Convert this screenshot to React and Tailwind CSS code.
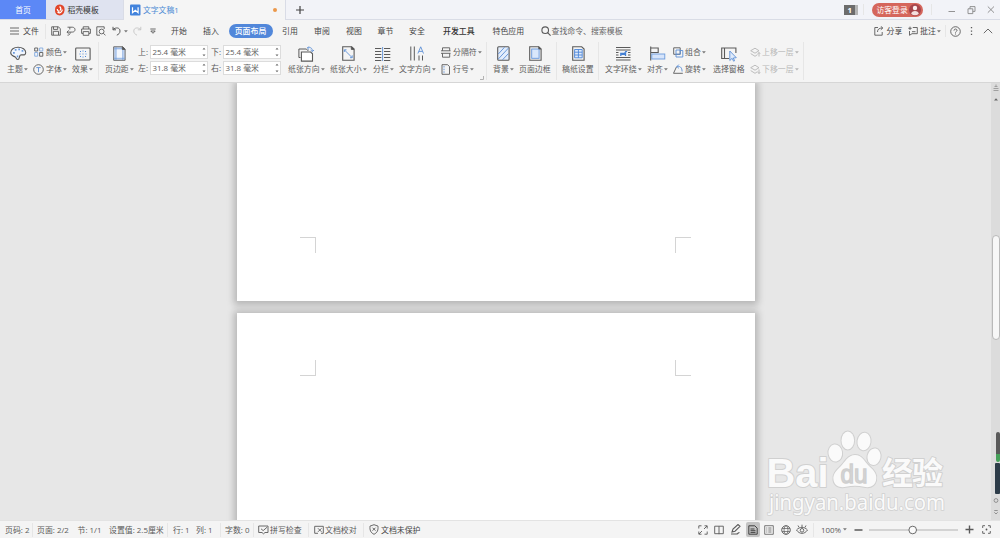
import React from 'react';

const Icon = ({ w, h, className = '', children }) => (
  <svg
    width={w}
    height={h}
    viewBox={`0 0 ${w} ${h}`}
    fill="none"
    stroke="#5a5a5a"
    strokeWidth="0.9"
    className={`shrink-0 ${className}`}
  >
    {children}
  </svg>
);

const Caret = ({ className = '' }) => (
  <svg width="4" height="3" viewBox="0 0 4 3" className={`shrink-0 ${className}`}>
    <path d="M0 0.3h3.8L1.9 2.5z" fill="#777" />
  </svg>
);

const Divider = ({ className = '' }) => <div className={`w-px shrink-0 bg-[#e6e6e6] ${className}`} />;

// large ribbon button: icon on top, label below
const BigButton = ({ width, icon, label, caret }) => (
  <div className={`flex shrink-0 flex-col items-start pt-[4px] ${width}`}>
    <div className="flex h-[15px] items-center">{icon}</div>
    <div className="mt-[3px] flex h-[10px] items-center gap-[1px] whitespace-nowrap">
      <span>{label}</span>
      {caret && <Caret />}
    </div>
  </div>
);

const SmallButton = ({ icon, label, muted }) => (
  <div className={`flex h-[17px] items-center whitespace-nowrap ${muted ? 'text-[#b9b9b9]' : ''}`}>
    <div className="flex w-[12px] shrink-0 items-center">{icon}</div>
    <span>{label}</span>
    <Caret className={muted ? 'ml-[1.5px] opacity-50' : 'ml-[1.5px]'} />
  </div>
);

const MarginInput = ({ label, value }) => (
  <div className="flex h-[15px] items-center">
    <span className="w-[12px] shrink-0">{label}:</span>
    <div className="flex h-[14px] w-[58px] items-center justify-between border border-[#dcdcdc] bg-white pr-[1px] pl-[1.5px]">
      <span>{value} 毫米</span>
      <svg width="4" height="10" viewBox="0 0 4 10" fill="#666">
        <path d="M0.5 2.5h3L2 0.8zM0.5 7.5h3L2 9.2z" />
      </svg>
    </div>
  </div>
);

const menuItems = [
  { label: '引用', width: 'w-[32px]' },
  { label: '审阅', width: 'w-[32px]' },
  { label: '视图', width: 'w-[31.5px]' },
  { label: '章节', width: 'w-[31.5px]' },
  { label: '安全', width: 'w-[34px]' },
  { label: '开发工具', width: 'w-[49.5px] font-medium text-[#333]' },
  { label: '特色应用', width: 'w-[48.5px]' },
];

const TabBar = () => (
  <div className="flex h-[20px] items-stretch border-b border-[#d9dce6] bg-[#f2f3f8] text-[7.8px]">
    <div className="flex w-[46px] items-center justify-center bg-[#5c88f6] pt-[1px] text-white">首页</div>
    <div className="flex w-[77px] items-center bg-[#dfe3f0] pt-[1px] pl-[9px] text-[#333]">
      <Icon w={10} h={12} className="mr-[2.5px]">
        <path d="M4.8 0.6c4 0.6 5 2.400 4.700 6-0.300 3.200-2 4.800-4.700 4.900C1.600 11.400 0 9.600 0 6.600 0 3 1 1 4.800 0.600z" fill="#e2472b" stroke="none" />
        <path d="M4.600 2.500c1.600 1.300 1.500 2.600 0.700 4M2.300 5c0 1.500 1 2.400 2.400 2M2.600 8c1.500 1.500 4 1 4.800-2.300" stroke="#fff" strokeWidth="1.200" />
      </Icon>
      稻壳模板
    </div>
    <div className="-mb-px flex w-[163px] items-center border-x border-[#d9dce6] bg-[#f5f5f5] pl-[6px] text-[#4a8ad4]">
      <Icon w={11} h={12} className="mr-[2px]">
        <rect x="0" y="0.500" width="10.500" height="11" rx="1" fill="#4283dc" stroke="none" />
        <path d="M2.500 3.300v5.400l2.800-2.400 2.800 2.400V3.300" stroke="#fff" strokeWidth="1.200" />
      </Icon>
      文字文稿1
      <div className="mr-[8px] ml-auto size-[4px] rounded-full bg-[#eb984a]" />
    </div>
    <div className="flex w-[558px] items-center pl-[9px]">
      <Icon w={10} h={10}>
        <path d="M1 5h8M5 1v8" stroke="#444" strokeWidth="1.200" />
      </Icon>
    </div>
    <div className="flex w-[19px] items-center">
      <div className="flex h-[10px] w-[14px] items-center border-r-[3px] border-[#b5b5b5] bg-[#6c6c6c] pl-[3.5px] font-bold text-white">1</div>
    </div>
    <Divider className="my-[4px]" />
    <div className="flex w-[67px] items-center pl-[8px]">
      <div className="flex h-[14px] w-[51px] items-center justify-between rounded-full bg-[#d5665c] pr-[2px] pl-[4.5px] text-white">
        访客登录
        <Icon w={12} h={12}>
          <circle cx="6" cy="6" r="6" fill="#a5454c" stroke="none" />
          <circle cx="6" cy="4" r="2.200" fill="#fbeeee" stroke="none" />
          <path d="M2.200 10c0-4 7.600-4 7.600 0q-3.800 2.500-7.600 0z" fill="#f3dede" stroke="none" />
        </Icon>
      </div>
    </div>
    <Divider className="my-[4px]" />
    <div className="flex items-center pl-[16px]">
      <Icon w={8} h={10} className="mr-[11px]">
        <path d="M0.500 6.500h6.500" stroke="#888" />
      </Icon>
      <Icon w={9} h={10} className="mr-[11px]">
        <path d="M1 3.800h4.800v4.800H1zM3 3.800V1.600h5v4.800H5.800" stroke="#888" strokeLinejoin="round" />
      </Icon>
      <Icon w={8} h={10}>
        <path d="M0.800 1.500l6.200 6.200M7 1.500L0.800 7.700" stroke="#888" />
      </Icon>
    </div>
  </div>
);

const MenuBar = () => (
  <div className="flex h-[22px] items-center pl-[10px] text-[#444]">
    <Icon w={9} h={8} className="mr-[4px]">
      <path d="M0 1h9M0 4h9M0 7h9" />
    </Icon>
    <span className="w-[22px]">文件</span>
    <Divider className="h-[15px]" />
    <Icon w={10} h={10} className="ml-[5px]">
      <path d="M0.700 0.800h6.800l1.800 2v6.400H0.700zM2.500 0.800v2.600h4.200V0.800M2.300 9V5.300h5.200V9" />
    </Icon>
    <Icon w={10} h={10} className="ml-[5px]">
      <path d="M1.500 1.200h4.800c3.600 0 3.600 4.900 0 4.900H1M3.800 3.500V1.200M2.800 4.300L1 6.100l1.500 1.600M4.200 6.300c0 2-1 2.900-2.700 2.900" />
    </Icon>
    <Icon w={10} h={10} className="ml-[5px]">
      <path d="M2.200 3V0.800h5.600V3M2 7.400H0.600V3h8.800v4.400H8M2.200 5.600h5.600v3.700H2.200z" />
    </Icon>
    <Icon w={10} h={10} className="ml-[5px]">
      <path d="M4 9.200H0.800V0.800h7.400V3" />
      <circle cx="5.600" cy="5.500" r="2.400" />
      <path d="M7.300 7.200l2.200 2.200" />
    </Icon>
    <Icon w={10} h={10} className="ml-[6px]">
      <path d="M0.800 3.500C4 1 8 1.500 8 5c0 2.200-1.300 3.200-3.200 4.200M1 0.800v3h3" strokeWidth="1" />
    </Icon>
    <Caret className="ml-[2px]" />
    <Icon w={9} h={10} className="ml-[5px]">
      <path d="M7.800 3.500C4.800 1 0.800 1.500 0.800 5c0 2.200 1.300 3.200 3.200 4.200M7.800 0.800v3h-3" stroke="#c4c4c4" />
    </Icon>
    <Icon w={6} h={8} className="mr-[15px] ml-[8px]">
      <path d="M0.300 2h5.400M0.800 4h4.400L3 6.300z" />
    </Icon>
    <span className="w-[32px] shrink-0">开始</span>
    <span className="w-[25.500px] shrink-0">插入</span>
    <span className="mr-[9.500px] flex h-[14px] w-[44px] shrink-0 items-center justify-center rounded-full bg-[#5187da] font-medium text-white">
      页面布局
    </span>
    {menuItems.map((item) => (
      <span key={item.label} className={`shrink-0 whitespace-nowrap ${item.width}`}>
        {item.label}
      </span>
    ))}
    <Icon w={10} h={10}>
      <circle cx="4.200" cy="4.200" r="3.300" strokeWidth="1.100" />
      <path d="M6.600 6.600l3 3" strokeWidth="1.100" />
    </Icon>
    <span className="ml-[0.500px] whitespace-nowrap text-[#666]">查找命令、搜索模板</span>
    <div className="ml-auto flex w-[126px] shrink-0 items-center">
      <Icon w={10} h={10}>
        <path d="M4 1.500H0.800v7.700h7.400V6M3.500 6c0-2.700 1.500-4 5-4M6.800 0.300L8.800 2 6.800 3.800" />
      </Icon>
      <span className="ml-[2.500px] w-[21.500px]">分享</span>
      <Icon w={10} h={10}>
        <path d="M4.800 1.500h4.500v6.200H4L1.500 9.300V5M0.300 2.300h3.400M2 0.600V4M4 5.700h3.500" />
      </Icon>
      <span className="ml-[2px] w-[17px] whitespace-nowrap">批注</span>
      <Caret />
      <Divider className="mr-[4px] ml-[4px] h-[12px]" />
      <Icon w={11} h={11}>
        <circle cx="5.500" cy="5.500" r="4.800" />
        <path d="M4 4.600c0-2.200 3.200-2 3 0C6.900 5.400 5.500 5.500 5.500 6.600M5.500 7.500v1" />
      </Icon>
      <Icon w={3} h={10} className="ml-[9px]">
        <path d="M1.500 1v1.300M1.500 4.400v1.300M1.500 7.800v1.300" strokeWidth="1.300" />
      </Icon>
      <Icon w={10} h={6} className="ml-[10px]">
        <path d="M0.800 5.200L5 1l4.200 4.200" />
      </Icon>
    </div>
  </div>
);

const Ribbon = () => (
  <div className="flex h-[40px] items-start pl-[7px] text-[#5c5c5c]">
    <BigButton
      width="w-[27px]"
      label="主题"
      caret
      icon={
        <Icon w={17} h={15} className="ml-[2.500px]">
          <path d="M8 1.200c4.500 0 7.700 2.400 7.700 5.300 0 3-2.200 2.400-4.300 2.300-3 0-1.200 4.700-3.500 4.700-1.700 0-1.500-1.800-2.700-2.500C3.500 10 0.700 9.800 0.700 6.800 0.700 3.500 4 1.200 8 1.200z" fill="#f0f6ff" strokeWidth="1.100" />
          <path d="M3 6.800h1.800M4.800 3.900h1.700M8.300 3.300h1.700M11.600 4.800h1.700M6.800 10.300h1.500" stroke="#6b9adb" strokeWidth="1.700" />
        </Icon>
      }
    />
    <div className="flex w-[38px] shrink-0 flex-col pt-[1.500px]">
      <SmallButton
        label="颜色"
        icon={
          <Icon w={10} h={10}>
            <path d="M0.700 1h3v3h-3zM5.600 5.500h3.200v3.700H5.600z" />
            <path d="M5.600 1h3.200v3H5.600zM0.700 5.500h3v3.700h-3z" stroke="#7fa8df" />
          </Icon>
        }
      />
      <SmallButton
        label="字体"
        icon={
          <Icon w={11} h={11} className="-ml-px">
            <circle cx="5.500" cy="5.500" r="4.800" />
            <path d="M3.300 3.600h4.400M5.500 3.600v4.600" stroke="#5b8ed6" />
          </Icon>
        }
      />
    </div>
    <BigButton
      width="w-[26px]"
      label="效果"
      caret
      icon={
        <Icon w={16} h={14} className="ml-[2.500px]">
          <rect x="0.700" y="1" width="14.400" height="12" rx="0.800" strokeWidth="1.100" />
          <path d="M5 4.500h1M7.500 4h1M10 4.500h1M4.500 7h1M7.500 7h1M10.500 7h1M5 9.500h1M7.500 10h1M10 9.500h1" stroke="#4c86d8" strokeWidth="1" />
        </Icon>
      }
    />
    <Divider className="mr-[6px] h-[38px]" />
    <BigButton
      width="w-[33px]"
      label="页边距"
      caret
      icon={
        <Icon w={13} h={15} className="ml-[7.500px]">
          <path d="M0.700 0.800h9l2.400 2.200v11.300H0.700z" fill="#cfdff7" />
          <path d="M3.300 3h6.200v9.500H3.300z" fill="#f3f7fd" stroke="none" />
          <path d="M3 1v13M9.800 3v11M1 2.800h8.500M1 12.300h11" stroke="#6f9bd9" strokeWidth="0.700" />
          <path d="M9.300 0.800v2.600h2.800z" fill="#444" />
        </Icon>
      }
    />
    <div className="grid w-[150px] shrink-0 grid-cols-[73px_70px] gap-y-[1px] pt-[2px]">
      <MarginInput label="上" value="25.4" />
      <MarginInput label="下" value="25.4" />
      <MarginInput label="左" value="31.8" />
      <MarginInput label="右" value="31.8" />
    </div>
    <BigButton
      width="w-[42px]"
      label="纸张方向"
      caret
      icon={
        <Icon w={17} h={16} className="ml-[10px]">
          <path d="M2.500 11.500H0.900V3h7.500l2 2" strokeWidth="1" />
          <path d="M3.400 6h9.300l1.800 1.800v7.300H3.400z" fill="#fff" strokeWidth="1.100" />
          <path d="M9.500 2c3-1.200 5 0.200 4.800 3.200M11 0.400L9.400 2 11 3.600M12.600 4l1.700 1.700L16 4" stroke="#5b8ed6" />
        </Icon>
      }
    />
    <BigButton
      width="w-[43px]"
      label="纸张大小"
      caret
      icon={
        <Icon w={13} h={15} className="ml-[12px]">
          <path d="M0.700 0.800h9l2.400 2.200v11.300H0.700z" strokeWidth="1.100" />
          <path d="M9.300 0.800v2.600h2.800z" fill="#444" />
          <path d="M2.500 4l7.500 7.500M2.300 6V3.800h2.200M10.200 9.300v2.400H8" stroke="#5b8ed6" />
        </Icon>
      }
    />
    <BigButton
      width="w-[26px]"
      label="分栏"
      caret
      icon={
        <Icon w={16} h={14} className="ml-[2px]">
          <path d="M0 1.500h6.300M0 4.500h6.300M0 7.500h6.300M0 10.500h6.300M0 13.500h6.300M9 1.500h6.300M9 4.500h6.300M9 7.500h6.300M9 10.500h6.300M9 13.500h6.300" strokeWidth="1" />
          <path d="M7.600 0v14" stroke="#5b8ed6" />
        </Icon>
      }
    />
    <BigButton
      width="w-[42px]"
      label="文字方向"
      caret
      icon={
        <Icon w={15} h={15} className="ml-[11px]">
          <path d="M0.800 0.500v14M4.300 0.500v14M9 9.500v5M12.500 9.500v5" strokeWidth="1" />
          <path d="M7.900 7.500L10.700 0.800l2.800 6.700M8.800 5.400h3.800" stroke="#5b8ed6" />
        </Icon>
      }
    />
    <div className="flex w-[45px] shrink-0 flex-col pt-[1.500px]">
      <SmallButton
        label="分隔符"
        icon={
          <Icon w={10} h={11}>
            <path d="M1.500 3.800V0.800h7.200v3M0 3.800h9.500M1.500 6.300v3.900h7.200V6.300M0 6.300h9.500" />
          </Icon>
        }
      />
      <div className="flex items-end justify-between">
        <SmallButton
          label="行号"
          icon={
            <Icon w={10} h={11}>
              <path d="M1 0.700h5.500l2 1.800v7.800H1z" />
              <path d="M3 2v1.500M3 4.700v1.500M3 7.300v1.500" stroke="#5b8ed6" />
            </Icon>
          }
        />
        <Icon w={4} h={4} className="mr-[2px] -mb-[2px]">
          <path d="M3.500 0v3.500H0" stroke="#aaa" />
        </Icon>
      </div>
    </div>
    <Divider className="mr-[6px] h-[38px]" />
    <BigButton
      width="w-[26px]"
      label="背景"
      caret
      icon={
        <Icon w={13} h={15} className="ml-[4px]">
          <rect x="0.700" y="0.700" width="11.400" height="13.600" rx="1" fill="#e3edfb" strokeWidth="1.100" />
          <path d="M1.300 8L7.500 1.300M1.300 13L11.500 2M5.500 13.800L11.500 7.500" stroke="#5b8ed6" />
        </Icon>
      }
    />
    <BigButton
      width="w-[37px]"
      label="页面边框"
      icon={
        <Icon w={13} h={15} className="ml-[9.500px]">
          <path d="M0.700 0.800h9l2.400 2.200v11.300H0.700z" strokeWidth="1.100" />
          <rect x="2.700" y="3" width="7.400" height="9.300" fill="#d9e7fb" stroke="#6495dc" />
          <path d="M9.800 0.800v2.200h2.300z" fill="#444" />
        </Icon>
      }
    />
    <Divider className="mr-[5px] h-[38px]" />
    <BigButton
      width="w-[36px]"
      label="稿纸设置"
      icon={
        <Icon w={13} h={15} className="ml-[9.500px]">
          <path d="M0.700 0.800h9l2.400 2.200v11.300H0.700z" strokeWidth="1.100" />
          <path d="M2.600 3.500h7.600v8.300H2.600zM2.600 6.200h7.600M2.600 9h7.600M6.400 3.500v8.300" stroke="#4c86d8" fill="#dfeafa" />
        </Icon>
      }
    />
    <Divider className="mr-[6px] h-[38px]" />
    <BigButton
      width="w-[42px]"
      label="文字环绕"
      caret
      icon={
        <Icon w={15} h={15} className="ml-[10.500px]">
          <path d="M0 1.500h14.500M0 4h14.500M0 6.500h2.500M0 9h2.500M12 6.500h2.500M12 9h2.500M0 11.500h14.500M0 14h14.500" strokeWidth="1" />
          <path d="M4.800 10V7.500h3.700l1.200-1.800h1.400M9.500 7v3M5.500 8.300h3.500" stroke="#4480d4" strokeWidth="1.300" />
        </Icon>
      }
    />
    <BigButton
      width="w-[26px]"
      label="对齐"
      caret
      icon={
        <Icon w={16} h={15} className="ml-[3px]">
          <path d="M0.700 0.500v14M0.700 2h7.500v4.500H0.700" strokeWidth="1.100" />
          <rect x="1.800" y="8" width="13" height="5" fill="#d6e4fa" stroke="#6b9adb" />
        </Icon>
      }
    />
    <div className="flex w-[40px] shrink-0 flex-col pt-[1.500px]">
      <SmallButton
        label="组合"
        icon={
          <Icon w={11} h={11}>
            <path d="M0.700 0.800h6.500v6.500H0.700z" />
            <path d="M3 3h4.200v4.200H3z" stroke="#5b8ed6" />
            <path d="M3 7.200V10h6.800V3.500H7.200" stroke="#5b8ed6" />
          </Icon>
        }
      />
      <SmallButton
        label="旋转"
        icon={
          <Icon w={11} h={11}>
            <path d="M0.500 9.300l3-6.500M0.500 9.300h9.300" />
            <path d="M3.500 2.800c3-1.200 5.600 0.300 5.600 4.700M5.800 0.600L3.900 2.600l2 1.700" stroke="#5b8ed6" />
          </Icon>
        }
      />
    </div>
    <BigButton
      width="w-[37px]"
      label="选择窗格"
      icon={
        <Icon w={17} h={16} className="ml-[8px]">
          <path d="M8 12.500H0.700V2h14.200v5M3.500 2v10.500" strokeWidth="1.100" />
          <path d="M8.800 5v9.500l2.300-2.200 1.500 2.900 1-0.500-1.300-2.700 3-0.300z" stroke="#5b8ed6" fill="#dfeafa" />
        </Icon>
      }
    />
    <div className="flex w-[53px] shrink-0 flex-col pt-[1.500px]">
      <SmallButton
        muted
        label="上移一层"
        icon={
          <Icon w={11} h={11}>
            <path d="M0.700 3.700L5 1.200l4 2.500-4 2.500zM0.700 6.600L5 9.300l2.500-1.700M9 9.500V5.500M7.800 6.800L9 5.500l1.200 1.300" stroke="#b5b5b5" />
          </Icon>
        }
      />
      <SmallButton
        muted
        label="下移一层"
        icon={
          <Icon w={11} h={11}>
            <path d="M0.700 3.700L5 1.200l4 2.500-4 2.500zM0.700 6.600L5 9.300l2.500-1.700M9 5.500v4M7.800 8.200L9 9.500l1.200-1.300" stroke="#b5b5b5" />
          </Icon>
        }
      />
    </div>
    <Divider className="h-[38px]" />
  </div>
);

const Sheet = ({ className, children }) => (
  <div className={`flex w-[518px] justify-between bg-white pr-[64px] pl-[63px] shadow-[0_1px_7px_3px_rgba(0,0,0,0.22)] ${className}`}>
    {children}
  </div>
);

const Watermark = () => (
  <svg width="190" height="95" viewBox="760 425 190 95" className="absolute right-[50px] bottom-0">
    <g fill="#fafafa" stroke="#d0d0d0" strokeWidth="2" paintOrder="stroke" strokeLinejoin="round">
      <text x="766.500" y="486.500" fontSize="40.500" fontWeight="700" textLength="62" lengthAdjust="spacingAndGlyphs" fontFamily="Liberation Sans, sans-serif">
        Bai
      </text>
      <ellipse cx="835.300" cy="453" rx="6.800" ry="8.600" transform="rotate(-8 835.300 453)" />
      <ellipse cx="847.800" cy="440.500" rx="6.300" ry="9" />
      <ellipse cx="864" cy="441.500" rx="6.500" ry="8.800" transform="rotate(8 864 441.500)" />
      <ellipse cx="874" cy="456.700" rx="6.500" ry="8.300" transform="rotate(12 874 456.700)" />
      <path d="M855 455c7 0 9.500 6.500 14 11 5 4.500 8.500 8.500 7 14.500-1.500 6-6.500 7.500-12 6.300-6-1.300-12-1.300-18 0-5.500 1.200-11.500-0.300-12.500-6.800-1-6 3-9.500 7-13.500 4.500-4.500 7.500-11.500 14.500-11.500z" />
      <text x="882" y="484" fontSize="31" fontWeight="700" textLength="61" fontFamily="Noto Sans CJK SC, sans-serif">
        经验
      </text>
    </g>
    <text x="840.500" y="482.500" fontSize="25" textLength="27" lengthAdjust="spacingAndGlyphs" fill="#d6d6d6" stroke="#cfcfcf" strokeWidth="1.300" fontFamily="Liberation Sans, sans-serif">
      du
    </text>
    <text x="769" y="509.500" fontSize="21" textLength="176" lengthAdjust="spacingAndGlyphs" fill="#fafafa" stroke="#d0d0d0" strokeWidth="1.600" paintOrder="stroke" fontFamily="Noto Sans, sans-serif">
      jingyan.baidu.com
    </text>
  </svg>
);

const Workspace = () => (
  <div className="relative flex h-[438px] overflow-hidden border-t border-[#d6d6d6] bg-[#e7e7e7]">
    <div className="flex w-[991px] flex-col gap-[12px] pl-[237px]">
      <Sheet className="h-[218px] shrink-0 items-start pt-[154px]">
        <div className="size-[16px] border-t border-r border-[#d4d4d4]" />
        <div className="size-[16px] border-t border-l border-[#d4d4d4]" />
      </Sheet>
      <Sheet className="h-[220px] shrink-0 items-start pt-[47px]">
        <div className="size-[16px] border-r border-b border-[#d4d4d4]" />
        <div className="size-[16px] border-b border-l border-[#d4d4d4]" />
      </Sheet>
    </div>
    <div className="flex w-[9px] flex-col items-center bg-[#dcdcdc]">
      <Icon w={8} h={22}>
        <path d="M1.500 5.500h5M1.500 7.500h5M4 1.500v2M2.500 3.500h3" stroke="#999" />
        <path d="M2 17.500h4L4 15.200z" fill="#666" stroke="none" />
      </Icon>
      <div className="mt-[130px] h-[105px] w-[8px] shrink-0 rounded-full border border-[#b9b9b9] bg-[#f7f7f7]" />
      <div className="mt-[92px] ml-[4px] h-[30px] w-[4px] shrink-0 rounded-[2px] border-b-[8px] border-[#46a05a] bg-[#595959]" />
      <div className="mt-px ml-[4px] h-[31px] w-[5px] shrink-0 rounded-[1px] bg-[#2d3c49]" />
      <Icon w={8} h={22} className="mt-[2px]">
        <circle cx="4" cy="4.500" r="1.900" stroke="#888" />
        <path d="M2.300 14.500h3.400M2.300 16.300L4 18l1.700-1.700" stroke="#888" />
      </Icon>
    </div>
    <Watermark />
  </div>
);

const StatusBar = () => (
  <div className="flex h-[18px] items-center whitespace-nowrap border-t border-[#e3e3e3] bg-[#f4f4f4] pl-[5px] text-[#5a5a5a]">
    <span className="w-[27px] shrink-0">页码: 2</span>
    <Divider className="mr-[4px] h-[14px]" />
    <span className="w-[40.500px] shrink-0">页面: 2/2</span>
    <span className="w-[31.500px] shrink-0">节: 1/1</span>
    <span className="w-[58px] shrink-0">设置值: 2.5厘米</span>
    <Divider className="mr-[5px] h-[14px]" />
    <span className="w-[23px] shrink-0">行: 1</span>
    <span className="w-[24px] shrink-0">列: 1</span>
    <Divider className="mr-[4px] h-[14px]" />
    <span className="w-[28px] shrink-0">字数: 0</span>
    <Divider className="mr-[4px] h-[14px]" />
    <Icon w={11} h={10} className="mr-[1px]">
      <path d="M0.700 1h9.300v6.500H7l-1.500 1.300L4 7.500H0.700zM3 3.800l2.200 1.800L9 2.300" />
    </Icon>
    <span className="w-[38px] shrink-0">拼写检查</span>
    <Divider className="mr-[5px] h-[14px]" />
    <Icon w={10} h={10} className="mr-[1px]">
      <path d="M4 8.300H0.700V1.300h8.600v7H7M4 3.300l3.500 3.500M7.500 3.300L4 6.800" />
    </Icon>
    <span className="w-[38px] shrink-0">文档校对</span>
    <Divider className="mr-[5px] h-[14px]" />
    <Icon w={10} h={11} className="mr-[2px]">
      <path d="M5 0.700l4 1.400c0.300 4-0.500 6.500-4 8.200C1.500 8.600 0.700 6.100 1 2.100zM3.500 3.700l3 3M6.500 3.700l-3 3" />
    </Icon>
    <span className="text-[#444]">文档未保护</span>
    <div className="ml-auto flex w-[302px] shrink-0 items-center">
      <Icon w={10} h={10} className="mr-[6px]">
        <path d="M3.500 0.800H0.800v2.700M6.500 0.800h2.700v2.700M3.500 9.200H0.800V6.500M6.500 9.200h2.700V6.500M6 4l3-3M4 6L1 9" />
      </Icon>
      <Icon w={10} h={10} className="mr-[6px]">
        <path d="M5 1.200H0.700v7.500h8.600V1.200H5v8" />
      </Icon>
      <Icon w={12} h={11} className="mr-[4px]">
        <path d="M2 8l1-3 5-4.500 2 1.800L5 7.200zM1 10h5.500c1.500 0 1.500-1.500 3-1.500" strokeWidth="1.100" />
      </Icon>
      <div className="mr-[4px] flex h-[15px] w-[14px] items-center justify-center rounded-[2px] bg-[#c3c3c3]">
        <Icon w={10} h={10}>
          <path d="M0.800 0.800h6l2.400 2.400v6H0.800zM2.500 4h4M2.500 5.700h5M2.500 7.400h5" stroke="#333" strokeWidth="0.900" />
        </Icon>
      </div>
      <Icon w={10} h={10} className="mr-[7px]">
        <path d="M0.700 0.700h8.600v8.600H0.700zM2.300 3h1M4.300 3h3.200M2.300 5h1M4.300 5h3.200M2.300 7h1M4.300 7h3.200" strokeWidth="0.800" />
      </Icon>
      <Icon w={10} h={10} className="mr-[5px]">
        <circle cx="5" cy="5" r="4.300" />
        <ellipse cx="5" cy="5" rx="2" ry="4.300" strokeWidth="0.700" />
        <path d="M1 3.500h8M1 6.500h8" strokeWidth="0.700" />
      </Icon>
      <Icon w={12} h={11}>
        <path d="M0.500 6c3-3.500 8-3.500 11 0-3 4.500-8 4.500-11 0zM3 3.300L2 1.500M6 3V0.700M9 3.300l1-1.800" />
        <circle cx="6" cy="6.300" r="1.800" />
      </Icon>
      <Divider className="mr-[7px] ml-[5px] h-[14px]" />
      <span className="w-[22px]">100%</span>
      <Caret />
      <Icon w={9} h={8} className="ml-[7px]">
        <path d="M0.500 4h8" strokeWidth="1.500" />
      </Icon>
      <Icon w={90} h={10} className="ml-[6px]">
        <path d="M0 5h89" stroke="#aaa" />
        <circle cx="43.700" cy="5" r="3.800" fill="#fafafa" />
      </Icon>
      <Icon w={9} h={9} className="ml-[6px]">
        <path d="M0.500 4.500h8M4.500 0.500v8" strokeWidth="1.400" />
      </Icon>
      <Icon w={9} h={9} className="ml-[8px]">
        <path d="M3 0.700H0.700V3M6 0.700h2.300V3M3 8.300H0.700V6M6 8.300h2.300V6" />
        <circle cx="4.500" cy="4.500" r="0.900" fill="#555" stroke="none" />
      </Icon>
    </div>
  </div>
);

const App = () => (
  <div className="flex h-[538px] w-[1000px] flex-col overflow-hidden bg-[#f4f4f4] font-['Open_Sans','Noto_Sans_CJK_SC',sans-serif] text-[7.9px] leading-[10px]">
    <TabBar />
    <MenuBar />
    <Ribbon />
    <Workspace />
    <StatusBar />
  </div>
);

export default App;
